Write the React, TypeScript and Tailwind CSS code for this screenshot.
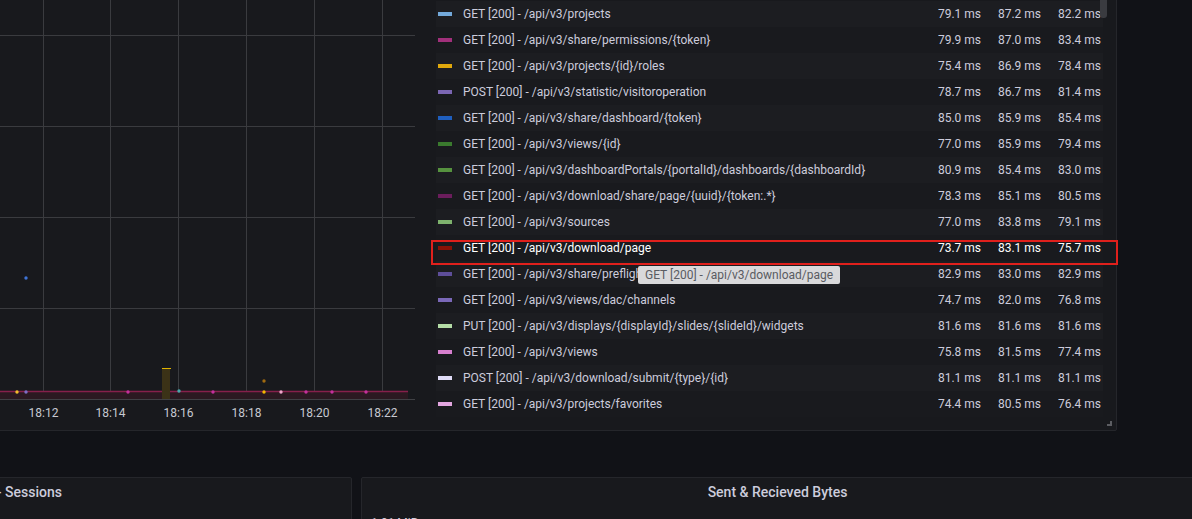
import React from "react";

type Row = { name: string; color: string; a: string; b: string; c: string };

const rows: Row[] = [
  { name: "GET [200] - /api/v3/projects", color: "#73a9db", a: "79.1", b: "87.2", c: "82.2" },
  { name: "GET [200] - /api/v3/share/permissions/{token}", color: "#a1307b", a: "79.9", b: "87.0", c: "83.4" },
  { name: "GET [200] - /api/v3/projects/{id}/roles", color: "#e0a80c", a: "75.4", b: "86.9", c: "78.4" },
  { name: "POST [200] - /api/v3/statistic/visitoroperation", color: "#7b66b3", a: "78.7", b: "86.7", c: "81.4" },
  { name: "GET [200] - /api/v3/share/dashboard/{token}", color: "#1f5fbf", a: "85.0", b: "85.9", c: "85.4" },
  { name: "GET [200] - /api/v3/views/{id}", color: "#3a7a2e", a: "77.0", b: "85.9", c: "79.4" },
  { name: "GET [200] - /api/v3/dashboardPortals/{portalId}/dashboards/{dashboardId}", color: "#56923f", a: "80.9", b: "85.4", c: "83.0" },
  { name: "GET [200] - /api/v3/download/share/page/{uuid}/{token:.*}", color: "#6b1d5c", a: "78.3", b: "85.1", c: "80.5" },
  { name: "GET [200] - /api/v3/sources", color: "#7eb26d", a: "77.0", b: "83.8", c: "79.1" },
  { name: "GET [200] - /api/v3/download/page", color: "#8a1206", a: "73.7", b: "83.1", c: "75.7" },
  { name: "GET [200] - /api/v3/share/preflight/{token}", color: "#5e4e9a", a: "82.9", b: "83.0", c: "82.9" },
  { name: "GET [200] - /api/v3/views/dac/channels", color: "#7a68b8", a: "74.7", b: "82.0", c: "76.8" },
  { name: "PUT [200] - /api/v3/displays/{displayId}/slides/{slideId}/widgets", color: "#b4dca6", a: "81.6", b: "81.6", c: "81.6" },
  { name: "GET [200] - /api/v3/views", color: "#d67fce", a: "75.8", b: "81.5", c: "77.4" },
  { name: "POST [200] - /api/v3/download/submit/{type}/{id}", color: "#e0dcf7", a: "81.1", b: "81.1", c: "81.1" },
  { name: "GET [200] - /api/v3/projects/favorites", color: "#e3a6e0", a: "74.4", b: "80.5", c: "76.4" },
];

const xs = [43.5, 110.5, 178.5, 246.5, 314.5, 382.5];
const labels = ["18:12", "18:14", "18:16", "18:18", "18:20", "18:22"];
const hy = [35.5, 126.5, 217.5, 308.5];

const dots: { x: number; y: number; c: string }[] = [
  { x: 26, y: 278, c: "#3f74d6" },
  { x: 17, y: 392, c: "#f2bf2c" },
  { x: 26, y: 392, c: "#7c6fc7" },
  { x: 128, y: 392, c: "#c4309c" },
  { x: 179, y: 391, c: "#4aa7ad" },
  { x: 213, y: 392, c: "#c4309c" },
  { x: 264, y: 381, c: "#a06a10" },
  { x: 264, y: 392, c: "#f5b800" },
  { x: 281, y: 392, c: "#f0a6cc" },
  { x: 306, y: 392, c: "#c4309c" },
  { x: 332, y: 392, c: "#c4309c" },
  { x: 366, y: 392, c: "#c4309c" },
];

function Chart() {
  return (
    <svg width={420} height={430} className="shrink-0 block">
      {hy.map((y) => (
        <line key={y} x1={0} x2={415} y1={y} y2={y} stroke="#3a3b3f" strokeWidth={1} />
      ))}
      {xs.map((x) => (
        <line key={x} x1={x} x2={x} y1={0} y2={399} stroke="#3a3b3f" strokeWidth={1} />
      ))}
      <rect x={0} y={392} width={408} height={7} fill="#2b1921" />
      <line x1={0} x2={408} y1={391.5} y2={391.5} stroke="#86204b" strokeWidth={1.5} />
      <rect x={162} y={368} width={8} height={31} fill="#3b3217" />
      <line x1={162} x2={171} y1={368.5} y2={368.5} stroke="#e0b400" strokeWidth={1} />
      <line x1={0} x2={415} y1={399.5} y2={399.5} stroke="#404145" strokeWidth={1} />
      {dots.map((d, i) => (
        <circle key={i} cx={d.x} cy={d.y} r={1.7} fill={d.c} />
      ))}
      {xs.map((x, i) => (
        <text
          key={x}
          x={x}
          y={417}
          textAnchor="middle"
          fontSize={12}
          fill="#c7c9d1"
          fontFamily="Roboto, sans-serif"
        >
          {labels[i]}
        </text>
      ))}
    </svg>
  );
}

function Legend() {
  return (
    <div className="relative ml-[16px] w-[667px] h-[430px] pt-[1px]">
      {rows.map((r, i) => {
        const hl = i === 9;
        return (
          <div
            key={r.name}
            className={`flex items-center h-[26px] pr-[2px] text-[12px] ${
              i % 2 === 0 ? "bg-[#1c1d21]" : "bg-[#191a1e]"
            } ${hl ? "text-white" : "text-[#ccccdc]"}`}
          >
            <span className="ml-[2px] w-[14px] h-[4px] shrink-0" style={{ backgroundColor: r.color }} />
            <span className="ml-[11px] flex-1 whitespace-nowrap overflow-hidden">{r.name}</span>
            <span className="w-[60px] text-right whitespace-nowrap">{r.a} ms</span>
            <span className="w-[60px] text-right whitespace-nowrap">{r.b} ms</span>
            <span className="w-[60px] text-right whitespace-nowrap">{r.c} ms</span>
          </div>
        );
      })}
    </div>
  );
}

export default function App() {
  return (
    <div className="relative w-[1192px] h-[519px] overflow-hidden bg-[#111217] font-['Roboto',sans-serif]">
      {/* top panel */}
      <div className="relative ml-[-20px] mt-[-20px] w-[1137px] h-[451px] border border-[#25262b] rounded-[2px] bg-[#18191d] pt-[19px] pl-[19px] flex">
        <Chart />
        <Legend />
        {/* scrollbar thumb */}
        <div className="absolute left-[1119px] top-0 w-[7px] h-[37px] rounded-[3px] bg-[#3a3b40]" />
        {/* resize handle */}
        <div className="absolute right-[4px] bottom-[4px] w-[5px] h-[5px] border-r-2 border-b-2 border-[#5c5d62]" />
      </div>

      {/* bottom panels */}
      <div className="flex mt-[46px] gap-[9px]">
        <div className="ml-[-20px] w-[372px] h-[80px] border border-[#25262b] rounded-[2px] bg-[#18191d] shrink-0">
          <div className="ml-[19px] w-[62px] h-[28px] flex items-center justify-end whitespace-nowrap text-[14px] font-medium text-[#ccccdc]">
            <span>Active Users - Sessions</span>
          </div>
        </div>
        <div className="w-[840px] h-[80px] border border-[#25262b] rounded-[2px] bg-[#18191d] shrink-0">
          <div className="w-[831px] h-[28px] flex items-center justify-center text-[14px] font-medium text-[#ccccdc]">
            Sent &amp; Recieved Bytes
          </div>
          <div className="ml-[9px] mt-[8px] text-[12px] text-[#ccccdc]">1.91 MiB</div>
        </div>
      </div>

      {/* annotation box */}
      <div className="absolute left-[431px] top-[240px] w-[687px] h-[25px] border-2 border-[#e0201c]" />

      {/* tooltip */}
      <div className="absolute left-[638px] top-[266px] h-[18px] px-[7px] flex items-center rounded-[2px] bg-[#d9d9db] text-[12px] text-[#5a5c62] whitespace-nowrap">
        GET [200] - /api/v3/download/page
      </div>
    </div>
  );
}
